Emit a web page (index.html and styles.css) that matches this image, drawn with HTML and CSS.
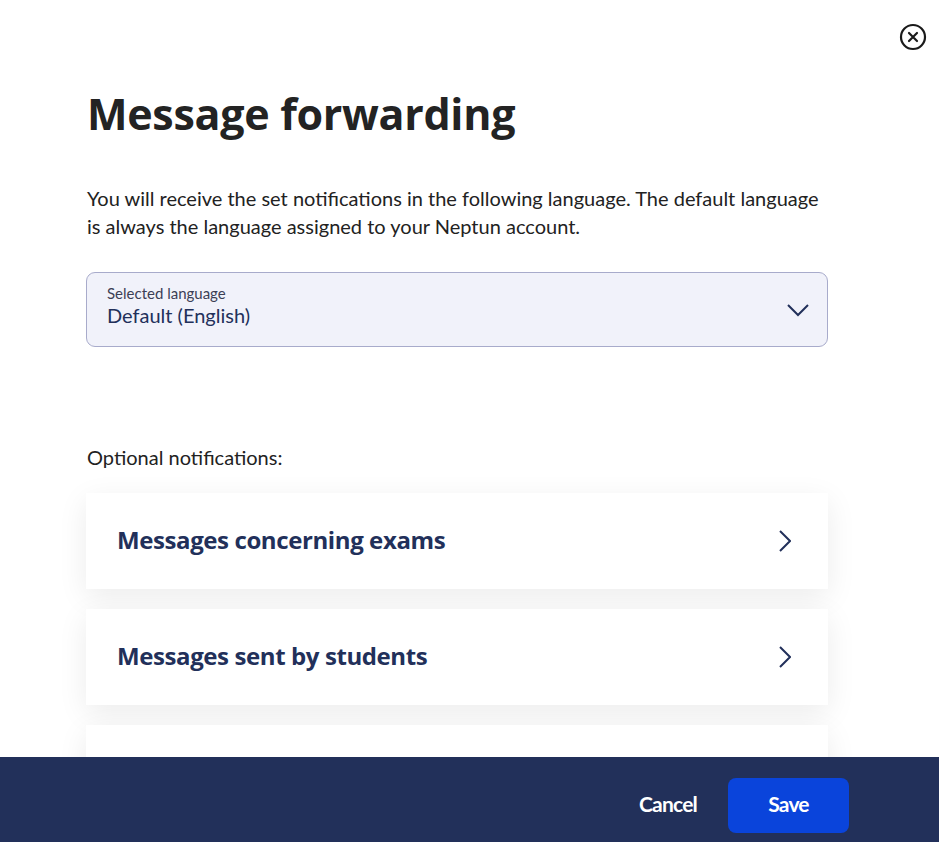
FILE: index.html
```html
<!DOCTYPE html>
<html lang="en">
<head>
    <meta charset="UTF-8">
    <meta name="viewport" content="width=device-width, initial-scale=1.0">
    <title>Message forwarding</title>
    <link rel="stylesheet" href="styles.css">
</head>
<body>
    <button class="close-btn" aria-label="Close">
        <svg width="28" height="28" viewBox="0 0 28 28" fill="none" stroke="#1a1a1a" stroke-width="2.2" stroke-linecap="round">
            <circle cx="14" cy="14" r="12"/>
            <path d="M10 10 L18 18 M18 10 L10 18"/>
        </svg>
    </button>

    <div class="container">
        <h1>Message forwarding</h1>
        <p class="intro">You will receive the set notifications in the following language. The default language is always the language assigned to your Neptun account.</p>

        <div class="select-box">
            <div class="select-text">
                <span class="select-label">Selected language</span>
                <span class="select-value">Default (English)</span>
            </div>
            <svg width="22" height="14" viewBox="0 0 22 14" fill="none" stroke="#22305a" stroke-width="2">
                <path d="M1 2 L11 12 L21 2"/>
            </svg>
        </div>

        <p class="section-label">Optional notifications:</p>

        <div class="card-list">
            <div class="card">
                <span class="card-title">Messages concerning exams</span>
                <svg width="12" height="22" viewBox="0 0 12 22" fill="none" stroke="#22305a" stroke-width="2">
                    <path d="M1 1 L11 11 L1 21"/>
                </svg>
            </div>
            <div class="card">
                <span class="card-title">Messages sent by students</span>
                <svg width="12" height="22" viewBox="0 0 12 22" fill="none" stroke="#22305a" stroke-width="2">
                    <path d="M1 1 L11 11 L1 21"/>
                </svg>
            </div>
            <div class="card">
                <span class="card-title">Messages from the administration</span>
                <svg width="12" height="22" viewBox="0 0 12 22" fill="none" stroke="#22305a" stroke-width="2">
                    <path d="M1 1 L11 11 L1 21"/>
                </svg>
            </div>
        </div>
    </div>

    <div class="footer">
        <button class="btn-cancel">Cancel</button>
        <button class="btn-save">Save</button>
    </div>
</body>
</html>
```

FILE: styles.css
```css
html, body {
    height: 100%;
}
body {
    font-family: Lato, "Open Sans", sans-serif;
    background-color: #fff;
    color: #222;
    margin: 0;
    overflow: hidden;
}
.close-btn {
    position: absolute;
    top: 23px;
    right: 12px;
    padding: 0;
    border: none;
    background: none;
    cursor: pointer;
}
.close-btn svg {
    display: block;
}
.container {
    width: 742px;
    margin-left: 86px;
    padding-top: 84px;
}
h1 {
    font-family: "Open Sans", sans-serif;
    font-size: 43px;
    font-weight: 700;
    letter-spacing: -0.3px;
    color: #232323;
    margin: 0 0 0 1px;
    line-height: 60px;
}
.intro {
    font-size: 20px;
    line-height: 28px;
    margin: 40px 0 0 1px;
    color: #222;
}
.select-box {
    display: flex;
    align-items: center;
    justify-content: space-between;
    height: 73px;
    margin-top: 32px;
    padding: 0 18px 0 20px;
    background-color: #f1f2fa;
    border: 1px solid #a8abcb;
    border-radius: 9px;
}
.select-text {
    display: flex;
    flex-direction: column;
    padding-bottom: 8px;
}
.select-label {
    font-size: 15px;
    line-height: 18px;
    color: #3c3f55;
}
.select-value {
    font-size: 20px;
    line-height: 26px;
    color: #22305a;
}
.section-label {
    font-size: 20px;
    line-height: 24px;
    margin: 98px 0 0 1px;
    color: #222;
}
.card-list {
    display: flex;
    flex-direction: column;
    gap: 20px;
    margin-top: 24px;
}
.card {
    display: flex;
    align-items: center;
    justify-content: space-between;
    height: 96px;
    padding: 0 37px 0 31px;
    background-color: #fff;
    box-shadow: 0 8px 28px rgba(0, 0, 0, 0.08);
    flex-shrink: 0;
}
.card-title {
    font-family: "Open Sans", sans-serif;
    font-size: 24px;
    font-weight: 700;
    letter-spacing: -0.4px;
    color: #22305a;
    padding-bottom: 4px;
}
.footer {
    position: fixed;
    left: 0;
    right: 0;
    top: 757px;
    height: 85px;
    background-color: #22305a;
    display: flex;
    align-items: flex-start;
    justify-content: flex-end;
    gap: 31px;
    padding-top: 21px;
    padding-right: 90px;
    box-sizing: border-box;
}
.btn-cancel {
    background: none;
    border: none;
    color: #fff;
    font-family: Lato, sans-serif;
    font-weight: 700;
    font-size: 21px;
    letter-spacing: -0.8px;
    cursor: pointer;
    padding: 0 0 4px;
    height: 55px;
}
.btn-save {
    width: 121px;
    height: 55px;
    padding: 0 0 4px;
    background-color: #0a44db;
    border: none;
    border-radius: 8px;
    color: #fff;
    font-family: Lato, sans-serif;
    font-weight: 700;
    font-size: 21px;
    letter-spacing: -0.8px;
    cursor: pointer;
}
```
